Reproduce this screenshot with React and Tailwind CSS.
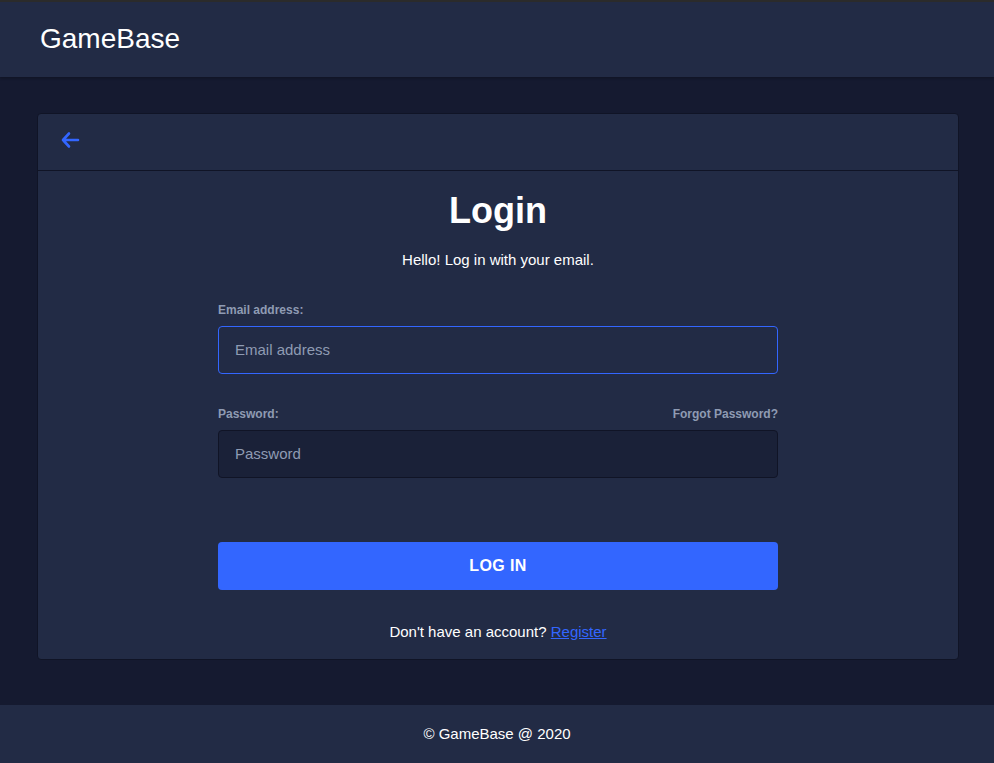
import React, { useState } from "react";

const BackArrow = () => (
  <svg className="w-5 h-5 text-[#3366ff]" fill="none" stroke="currentColor" viewBox="0 0 20 20">
    <path strokeLinecap="round" strokeLinejoin="round" strokeWidth={2.6} d="M18 10H3m0 0l6-6.5M3 10l6 6.5" />
  </svg>
);

const App = () => {
  const [email, setEmail] = useState("");
  const [password, setPassword] = useState("");

  return (
    <div className="min-h-screen flex flex-col bg-[#151a30] text-white font-['Liberation_Sans',Arial,sans-serif]">
      {/* Header */}
      <header className="h-[77px] bg-[#222b45] border-t-2 border-[#2b2b2b] flex items-center px-10 pb-0.5 shadow-[0_1px_3px_rgba(0,0,0,0.3)]">
        <span className="text-[28px] text-white">GameBase</span>
      </header>

      {/* Content */}
      <main className="flex-1 pl-[37px] pr-[35px] pt-9 pb-[45px]">
        <div className="bg-[#222b45] border border-[#101426] rounded">
          <div className="h-[57px] flex items-center px-[22px] pb-1 border-b border-[#101426]">
            <button className="flex items-center"><BackArrow /></button>
          </div>

          <div className="flex flex-col items-center pt-[18px] pb-4">
            <h1 className="text-[36px] font-bold leading-[44px]">Login</h1>
            <p className="text-[15px] mt-4">Hello! Log in with your email.</p>

            <form className="w-[560px] mt-[30px]" onSubmit={e => e.preventDefault()}>
              <label className="block text-xs font-bold text-[#8f9bb3] mb-2">Email address:</label>
              <input
                type="email"
                value={email}
                onChange={e => setEmail(e.target.value)}
                placeholder="Email address"
                autoFocus
                className="w-full h-12 px-4 rounded bg-[#222b45] border border-[#3366ff] text-[15px] text-white placeholder-[#8f9bb3] outline-none"
              />

              <div className="flex items-center justify-between mt-8 mb-2">
                <label className="text-xs font-bold text-[#8f9bb3]">Password:</label>
                <a href="#" className="text-xs font-bold text-[#8f9bb3]">Forgot Password?</a>
              </div>
              <input
                type="password"
                value={password}
                onChange={e => setPassword(e.target.value)}
                placeholder="Password"
                className="w-full h-12 px-4 rounded bg-[#1a2138] border border-[#101426] text-[15px] text-white placeholder-[#8f9bb3] outline-none"
              />

              <button type="submit" className="w-full h-12 mt-16 rounded bg-[#3366ff] text-white font-bold text-base tracking-wide">
                LOG IN
              </button>
            </form>

            <p className="text-[15px] mt-[31px]">
              Don't have an account? <a href="#" className="text-[#3366ff] underline">Register</a>
            </p>
          </div>
        </div>
      </main>

      {/* Footer */}
      <footer className="h-[58px] bg-[#222b45] flex items-center justify-center text-[15px]">
        © GameBase @ 2020
      </footer>
    </div>
  );
};

export default App;
